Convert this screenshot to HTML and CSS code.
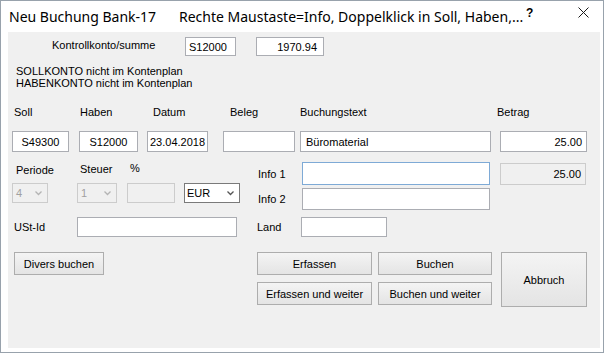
FILE: index.html
```html
<!DOCTYPE html>
<html>
<head>
    <title>Neu Buchung Bank-17</title>
    <link rel="stylesheet" href="styles.css">
</head>
<body>
    <div class="window">
        <div class="titlebar">
            <span class="title">Neu Buchung Bank-17</span>
            <span class="title hint">Rechte Maustaste=Info, Doppelklick in Soll, Haben,...</span>
            <span class="help">?</span>
            <span class="close">
                <svg width="11" height="11" viewBox="0 0 11 11"><path d="M0.5 0.5 L10.5 10.5 M10.5 0.5 L0.5 10.5" stroke="#1a1a1a" stroke-width="1"/></svg>
            </span>
        </div>

        <div class="client">
            <div class="row kontroll">
                <span class="lbl-kontroll">Kontrollkonto/summe</span>
                <div class="edit kto">S12000</div>
                <div class="edit summe">1970.94</div>
            </div>

            <div class="messages">
                <div>SOLLKONTO nicht im Kontenplan</div>
                <div>HABENKONTO nicht im Kontenplan</div>
            </div>

            <div class="row captions">
                <span class="c-soll">Soll</span>
                <span class="c-haben">Haben</span>
                <span class="c-datum">Datum</span>
                <span class="c-beleg">Beleg</span>
                <span class="c-text">Buchungstext</span>
                <span class="c-betrag">Betrag</span>
            </div>

            <div class="row fields">
                <div class="edit f-soll">S49300</div>
                <div class="edit f-haben">S12000</div>
                <div class="edit f-datum">23.04.2018</div>
                <div class="edit f-beleg"></div>
                <div class="edit f-text">Büromaterial</div>
                <div class="edit f-betrag">25.00</div>
            </div>

            <div class="middle">
                <div class="left-col">
                    <div class="row tax-captions">
                        <span class="c-periode">Periode</span>
                        <span class="c-steuer">Steuer</span>
                        <span class="c-prozent">%</span>
                    </div>
                    <div class="row combos">
                        <div class="combo disabled k-periode">
                            <span>4</span>
                            <svg width="7" height="5" viewBox="0 0 7 5"><polyline points="0.5,0.5 3.5,3.5 6.5,0.5" fill="none" stroke="#b4b4b4" stroke-width="1.3"/></svg>
                        </div>
                        <div class="combo disabled k-steuer">
                            <span>1</span>
                            <svg width="7" height="5" viewBox="0 0 7 5"><polyline points="0.5,0.5 3.5,3.5 6.5,0.5" fill="none" stroke="#b4b4b4" stroke-width="1.3"/></svg>
                        </div>
                        <div class="edit disabled k-prozent"></div>
                        <div class="combo k-waehrung">
                            <span>EUR</span>
                            <svg width="7" height="5" viewBox="0 0 7 5"><polyline points="0.5,0.5 3.5,3.5 6.5,0.5" fill="none" stroke="#555" stroke-width="1.3"/></svg>
                        </div>
                    </div>
                    <div class="row ust">
                        <span class="c-ust">USt-Id</span>
                        <div class="edit f-ust"></div>
                    </div>
                </div>

                <div class="mid-col">
                    <div class="row info1">
                        <span class="c-info">Info 1</span>
                        <div class="edit focused f-info"></div>
                    </div>
                    <div class="row info2">
                        <span class="c-info">Info 2</span>
                        <div class="edit f-info"></div>
                    </div>
                    <div class="row land">
                        <span class="c-land">Land</span>
                        <div class="edit f-land"></div>
                    </div>
                </div>

                <div class="right-col">
                    <div class="edit disabled f-betrag2">25.00</div>
                </div>
            </div>

            <div class="actions">
                <div class="btn b-divers">Divers buchen</div>
                <div class="btn-grid">
                    <div class="btn">Erfassen</div>
                    <div class="btn">Buchen</div>
                    <div class="btn">Erfassen und weiter</div>
                    <div class="btn">Buchen und weiter</div>
                </div>
                <div class="btn b-abbruch">Abbruch</div>
            </div>
        </div>
    </div>
</body>
</html>
```

FILE: styles.css
```css
body {
    margin: 0;
    background: #fff;
    font-family: "Liberation Sans", Arial, sans-serif;
    font-size: 11px;
    color: #000;
}
.window {
    width: 604px;
    height: 353px;
    box-sizing: border-box;
    border: 1px solid #98a2ac;
    padding: 0 3px 4px 7px;
    background: #fff;
}
.titlebar {
    height: 31px;
    display: flex;
    align-items: center;
    font-family: "Noto Sans", sans-serif;
    font-size: 14px;
    color: #000;
}
.title {
    margin-left: 1px;
    width: 170px;
    white-space: nowrap;
}
.hint {
    flex: 1;
    width: auto;
    margin-left: 0;
}
.help {
    font-family: "Liberation Sans", Arial, sans-serif;
    font-weight: bold;
    font-size: 12px;
    width: 7px;
    margin-right: 45px;
    align-self: flex-start;
    margin-top: 5px;
}
.close {
    display: flex;
    width: 11px;
    height: 11px;
    margin-right: 11px;
    align-self: flex-start;
    margin-top: 6px;
}
.client {
    height: 316px;
    box-sizing: border-box;
    background: #f0f0f0;
    padding-top: 5px;
}
.row {
    display: flex;
    align-items: center;
}
.edit {
    box-sizing: border-box;
    height: 100%;
    display: flex;
    align-items: center;
    padding: 0 3px;
    border: 1px solid #abadb3;
    background: #fff;
    white-space: nowrap;
}
.edit.disabled {
    background: #f0f0f0;
    border-color: #cccccc;
}
.edit.focused {
    border-color: #7eaad6;
}

/* Kontrollkonto */
.kontroll {
    height: 19px;
}
.lbl-kontroll {
    margin-left: 44px;
    width: 133px;
    margin-top: -3px;
}
.kto {
    width: 51px;
}
.summe {
    width: 68px;
    margin-left: 20px;
    justify-content: flex-end;
    padding-right: 6px;
}
.messages {
    margin-top: 9px;
    padding-left: 8px;
    line-height: 12px;
}

/* Hauptzeile */
.captions {
    margin-top: 17px;
    height: 12px;
    line-height: 12px;
}
.c-soll { margin-left: 6px; width: 66px; }
.c-haben { width: 73px; }
.c-datum { width: 77px; }
.c-beleg { width: 70px; }
.c-text { width: 197px; }

.fields {
    margin-top: 13px;
    height: 21px;
}
.f-soll { margin-left: 4px; width: 57px; justify-content: center; }
.f-haben { margin-left: 10px; width: 59px; justify-content: center; }
.f-datum { margin-left: 9px; width: 61px; padding-left: 2px; }
.f-beleg { margin-left: 15px; width: 72px; }
.f-text { margin-left: 5px; width: 191px; padding-left: 5px; }
.f-betrag { margin-left: 9px; width: 87px; justify-content: flex-end; padding-right: 4px; }

/* Mittelteil */
.middle {
    display: flex;
    align-items: flex-start;
}
.left-col {
    width: 241px;
}
.tax-captions {
    margin-top: 12px;
    height: 12px;
    line-height: 12px;
}
.c-periode { margin-left: 8px; width: 64px; }
.c-steuer { width: 50px; margin-top: -3px; }
.c-prozent { margin-top: -4px; }
.combos {
    margin-top: 7px;
    height: 20px;
}
.combo {
    box-sizing: border-box;
    height: 100%;
    display: flex;
    align-items: center;
    justify-content: space-between;
    padding: 0 5px 0 3px;
    border: 1px solid #7a7a7a;
    background: #fff;
}
.combo.disabled {
    border-color: #cccccc;
    background: #f0f0f0;
    color: #a0a0a0;
}
.k-periode { margin-left: 4px; width: 36px; }
.k-steuer { margin-left: 29px; width: 40px; }
.k-prozent { margin-left: 10px; width: 48px; }
.k-waehrung { margin-left: 9px; width: 56px; padding-left: 2px; }
.ust {
    margin-top: 14px;
    height: 20px;
}
.c-ust { margin-left: 6px; width: 63px; }
.f-ust { width: 160px; }

.mid-col {
    margin-left: 8px;
}
.info1 {
    margin-top: 10px;
    height: 23px;
}
.info2 {
    margin-top: 3px;
    height: 22px;
}
.land {
    margin-top: 7px;
    height: 20px;
}
.c-info { width: 45px; padding-left: 1px; box-sizing: border-box; }
.c-land { width: 44px; }
.f-info { width: 188px; }
.f-land { width: 86px; }

.right-col {
    margin-left: 10px;
}
.f-betrag2 {
    margin-top: 11px;
    height: 22px;
    width: 86px;
    justify-content: flex-end;
    padding-right: 4px;
    border-color: #bdbdbd;
}

/* Schaltflächen */
.actions {
    display: flex;
    align-items: flex-start;
    margin-top: 15px;
}
.btn {
    box-sizing: border-box;
    height: 23px;
    display: flex;
    align-items: center;
    justify-content: center;
    border: 1px solid #adadad;
    background: linear-gradient(#f4f4f4, #e4e4e4);
    white-space: nowrap;
}
.b-divers {
    margin-left: 6px;
    width: 90px;
}
.btn-grid {
    margin-left: 153px;
    display: grid;
    grid-template-columns: 115px 114px;
    grid-auto-rows: 23px;
    column-gap: 6px;
    row-gap: 7px;
}
.b-abbruch {
    margin-left: 9px;
    width: 86px;
    height: 55px;
}
```
